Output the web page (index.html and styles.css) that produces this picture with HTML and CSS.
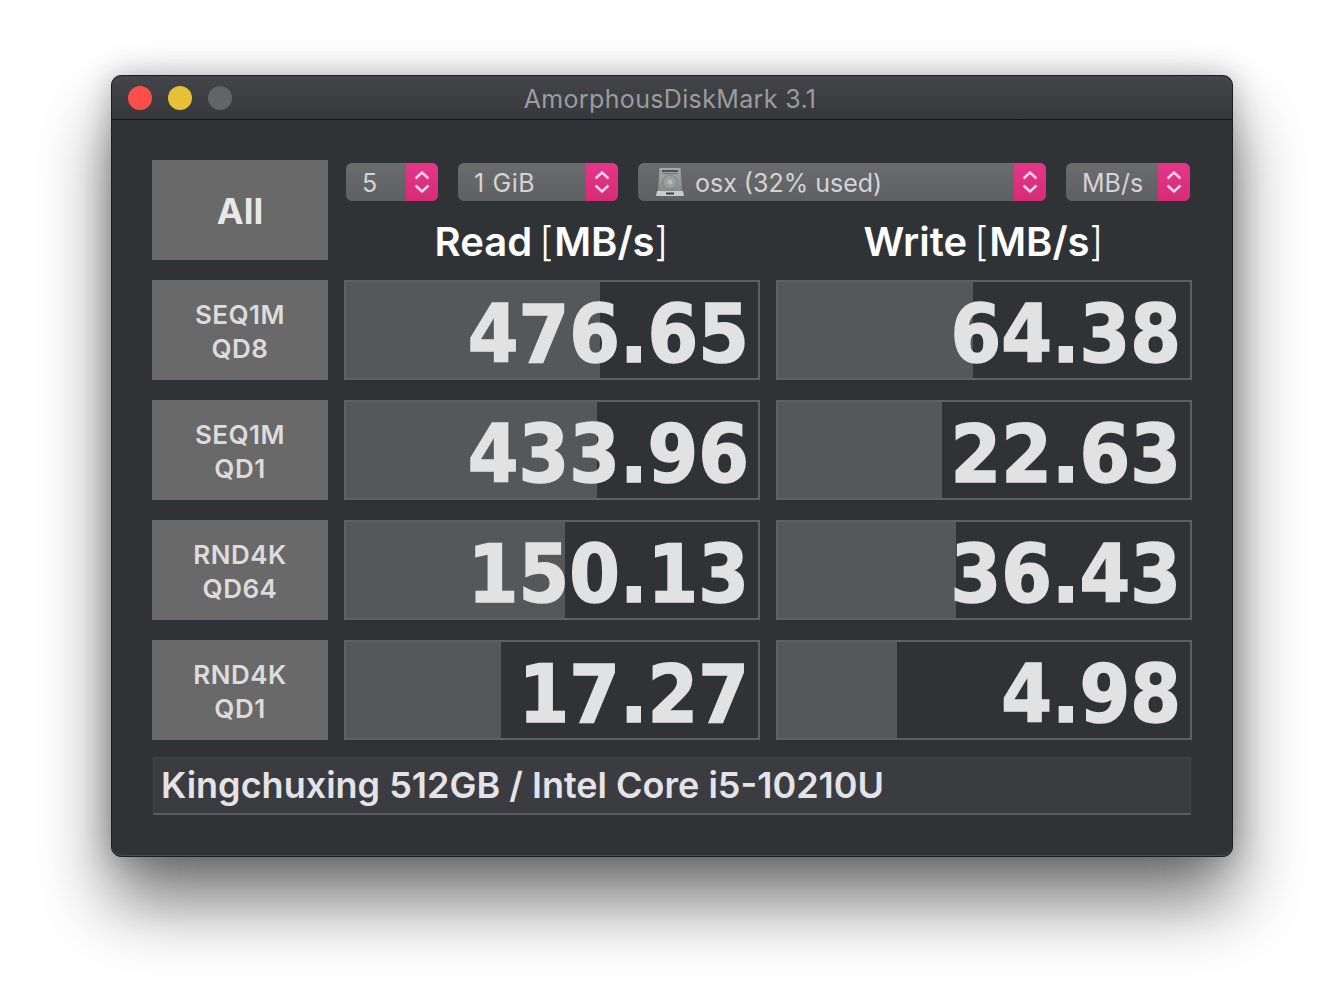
FILE: index.html
```html
<!DOCTYPE html>
<html lang="en">
<head>
  <meta charset="UTF-8" />
  <title>AmorphousDiskMark 3.1</title>
  <link rel="stylesheet" href="styles.css">
</head>
<body>
  <div class="window">
    <div class="titlebar">
      <div class="lights">
        <span class="light red"></span>
        <span class="light yellow"></span>
        <span class="light gray"></span>
      </div>
      <div class="title">AmorphousDiskMark 3.1</div>
    </div>

    <div class="content">
      <div class="grid">
        <button class="test-btn all-btn"><span>All</span></button>

        <div class="top-right">
          <div class="selects">
            <div class="select sel-count">
              <span class="sel-value">5</span>
              <span class="stepper"><svg viewBox="0 0 16 26"><path d="M1.500 9.500 L8 3.500 L14.500 9.500 M1.500 16.500 L8 22.500 L14.500 16.500"/></svg></span>
            </div>
            <div class="select sel-size">
              <span class="sel-value">1 GiB</span>
              <span class="stepper"><svg viewBox="0 0 16 26"><path d="M1.500 9.500 L8 3.500 L14.500 9.500 M1.500 16.500 L8 22.500 L14.500 16.500"/></svg></span>
            </div>
            <div class="select sel-disk">
              <span class="sel-value">
                <svg class="disk-icon" viewBox="0 0 30 30">
                  <defs>
                    <linearGradient id="diskBody" x1="0" y1="0" x2="0" y2="1">
                      <stop offset="0" stop-color="#a4aba9"/>
                      <stop offset="1" stop-color="#858d8b"/>
                    </linearGradient>
                  </defs>
                  <path d="M4.500 1 H25.500 L27 24 H3 Z" fill="url(#diskBody)"/>
                  <path d="M2 24 H28 L29 29 H1 Z" fill="#c9cccc"/>
                  <rect x="7" y="3" width="16" height="2" fill="#4a5452"/>
                  <rect x="7" y="6" width="16" height="1" fill="#6a7472"/>
                  <circle cx="15" cy="15" r="7" fill="#98a09e" stroke="#7b8381"/>
                  <circle cx="15" cy="15" r="2.500" fill="#b4bab9"/>
                  <path d="M11 25.500 H19 V27.500 H11 Z" fill="#3a3f3e"/>
                </svg>
                osx (32% used)
              </span>
              <span class="stepper"><svg viewBox="0 0 16 26"><path d="M1.500 9.500 L8 3.500 L14.500 9.500 M1.500 16.500 L8 22.500 L14.500 16.500"/></svg></span>
            </div>
            <div class="select sel-unit">
              <span class="sel-value">MB/s</span>
              <span class="stepper"><svg viewBox="0 0 16 26"><path d="M1.500 9.500 L8 3.500 L14.500 9.500 M1.500 16.500 L8 22.500 L14.500 16.500"/></svg></span>
            </div>
          </div>
          <div class="headers">
            <div class="col-head">Read <span class="bracket">[</span>MB/s<span class="bracket">]</span></div>
            <div class="col-head">Write <span class="bracket">[</span>MB/s<span class="bracket">]</span></div>
          </div>
        </div>

        <button class="test-btn"><span>SEQ1M<br>QD8</span></button>
        <div class="result" style="--fill: 61.6%">476.65</div>
        <div class="result" style="--fill: 47.3%">64.38</div>

        <button class="test-btn"><span>SEQ1M<br>QD1</span></button>
        <div class="result" style="--fill: 60.9%">433.96</div>
        <div class="result" style="--fill: 39.8%">22.63</div>

        <button class="test-btn"><span>RND4K<br>QD64</span></button>
        <div class="result" style="--fill: 53.1%">150.13</div>
        <div class="result" style="--fill: 43.2%">36.43</div>

        <button class="test-btn"><span>RND4K<br>QD1</span></button>
        <div class="result" style="--fill: 37.7%">17.27</div>
        <div class="result" style="--fill: 28.9%">4.98</div>
      </div>

      <div class="comment">Kingchuxing 512GB / Intel Core i5-10210U</div>
    </div>
  </div>
</body>
</html>
```

FILE: styles.css
```css
body {
  margin: 0;
  padding: 75px 111px 147px;
  background: #fff;
  font-family: Inter, "Liberation Sans", sans-serif;
}

.window {
  width: 1122px;
  height: 782px;
  box-sizing: border-box;
  border: 1px solid #1c1d1f;
  border-radius: 10px;
  overflow: hidden;
  background: #303336;
  box-shadow: 0 44px 70px rgba(0, 0, 0, 0.55), 0 0 30px rgba(0, 0, 0, 0.25), inset 0 -1px 0 #4a4c4f;
}

/* title bar */
.titlebar {
  height: 43px;
  display: flex;
  align-items: center;
  justify-content: center;
  position: relative;
  background: linear-gradient(#434548, #36383b);
  border-bottom: 1px solid #141517;
}

.lights {
  position: absolute;
  left: 16px;
  top: 10px;
  display: flex;
  gap: 16px;
}

.light {
  width: 24px;
  height: 24px;
  border-radius: 50%;
}

.red { background: #fc4e4a; }
.yellow { background: #e6c035; }
.gray { background: #636467; }

.title {
  color: #9b9c9e;
  font-size: 25px;
  letter-spacing: 0.35px;
  padding: 3px 4px 0 0;
}

/* main */
.content {
  padding: 40px 40px 0;
}

.grid {
  display: grid;
  grid-template-columns: 176px 416px 416px;
  grid-template-rows: repeat(5, 100px);
  column-gap: 16px;
  row-gap: 20px;
}

.test-btn {
  border: none;
  padding: 0;
  background: #696969;
  color: #dcdcdc;
  font-family: inherit;
  font-size: 26px;
  font-weight: 600;
  letter-spacing: 0.5px;
  line-height: 34px;
}

.test-btn span {
  display: block;
  padding-top: 3px;
}

.all-btn {
  font-size: 36px;
  font-weight: 700;
  letter-spacing: 0;
  color: #e8e8e8;
}

.all-btn span {
  padding-top: 1px;
}

.top-right {
  grid-column: 2 / 4;
  display: flex;
  flex-direction: column;
}

.selects {
  display: flex;
  gap: 20px;
  padding: 3px 2px 0;
}

.select {
  height: 38px;
  display: flex;
  justify-content: space-between;
  border-radius: 6px;
  overflow: hidden;
  background: linear-gradient(#6b6c6e, #5f6062);
  color: #d4d4d6;
  font-size: 25px;
}

.sel-count { width: 92px; }
.sel-size { width: 160px; letter-spacing: 0.6px; }
.sel-disk { width: 408px; }
.sel-unit { width: 124px; }

.sel-value {
  display: flex;
  align-items: center;
  gap: 10px;
  padding: 2px 0 0 16px;
}

.disk-icon {
  width: 30px;
  height: 30px;
  margin: -2px 0 0 1px;
}

.stepper {
  width: 32px;
  display: flex;
  align-items: center;
  justify-content: center;
  background: linear-gradient(#e5358b, #d62d76);
}

.stepper svg {
  width: 16px;
  height: 26px;
  fill: none;
  stroke: #f6d3e3;
  stroke-width: 2.400;
}

.headers {
  display: grid;
  grid-template-columns: 416px 416px;
  column-gap: 16px;
  margin-top: 16px;
}

.col-head {
  text-align: center;
  color: #fff;
  font-size: 40px;
  font-weight: 600;
  line-height: 50px;
  word-spacing: -3px;
}

.bracket {
  font-weight: 300;
  letter-spacing: 1px;
}

.result {
  --fill: 0%;
  box-sizing: border-box;
  border: 2px solid #5e6163;
  background: linear-gradient(to right, #565759 var(--fill), transparent var(--fill));
  color: #e2e2e2;
  font-family: "DejaVu Sans Condensed", "DejaVu Sans", sans-serif;
  font-stretch: condensed;
  font-size: 81px;
  font-weight: 700;
  -webkit-text-stroke: 1.500px #e2e2e2;
  line-height: 100px;
  padding: 8px 9px 0 0;
  display: flex;
  align-items: center;
  justify-content: flex-end;
}

.comment {
  margin: 17px 0 0 1px;
  height: 58px;
  box-sizing: border-box;
  width: 1038px;
  padding-left: 7px;
  background: #3b3c3f;
  border: 1px solid #434447;
  border-bottom: 2px solid #5b5d60;
  color: #e4e4e8;
  font-size: 36px;
  font-weight: 600;
  line-height: 54px;
}
```
